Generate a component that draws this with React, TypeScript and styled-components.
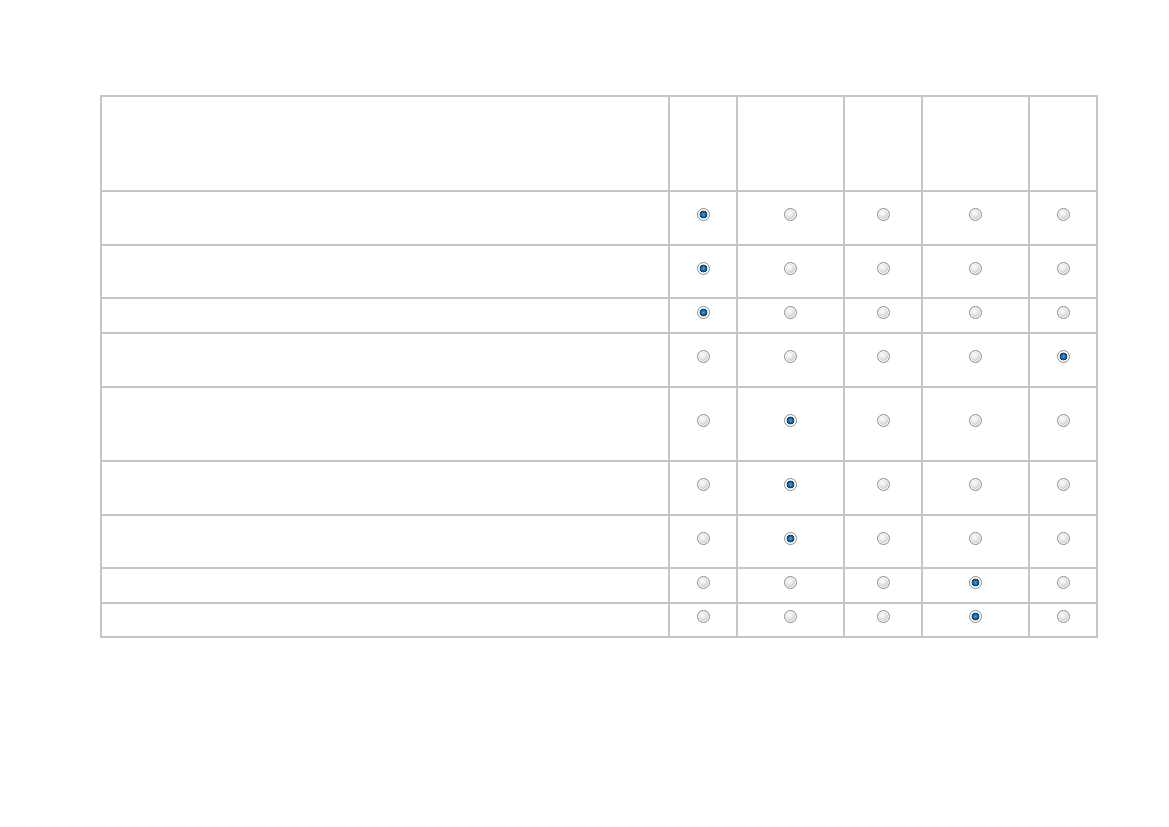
import React from 'react';
import styled, { createGlobalStyle } from 'styled-components';

const GlobalStyle = createGlobalStyle`
  html, body {
    margin: 0;
    padding: 0;
    background: #ffffff;
    font-family: "Liberation Sans", Arial, sans-serif;
  }
`;

const Page = styled.div`
  padding: 95px 0 0 100px;
`;

const Grid = styled.table`
  border-collapse: collapse;
  table-layout: fixed;
  width: 998px;
`;

const HeadCell = styled.th`
  border: 2px solid #c6c6c6;
  padding: 0;
  height: ${p => p.$h}px;
`;

const Cell = styled.td`
  border: 2px solid #c6c6c6;
  padding: 0;
  height: ${p => p.$h}px;
  vertical-align: middle;
`;

const Radio = styled.span`
  display: block;
  box-sizing: border-box;
  width: 13px;
  height: 13px;
  margin: 0 auto 7px;
  border-radius: 50%;
  border: 1px solid #8f8f8f;
  background: ${p =>
    p.$on
      ? 'radial-gradient(circle at 50% 50%, #3ea3e8 0, #1675c0 1.8px, #0e5696 2.8px, #1a3550 3.6px, #ffffff 4.2px, #f2f2f2 5.5px)'
      : 'radial-gradient(circle at 42% 38%, #fdfdfd 0, #eeeeee 2.5px, #d2d2d2 5.5px)'};
  box-shadow: inset 0 0 0 1px rgba(255, 255, 255, 0.9);
`;

const widths = [568, 68, 107, 78, 107, 68];
const rowHeights = [54, 53, 35, 54, 74, 54, 53, 35, 34];
const picks = [1, 1, 1, 5, 2, 2, 2, 4, 4];

const App: React.FC = () => (
  <Page>
    <GlobalStyle />
    <Grid>
      <colgroup>
        {widths.map((w, i) => (
          <col key={i} style={{ width: w }} />
        ))}
      </colgroup>
      <thead>
        <tr>
          {widths.map((_, i) => (
            <HeadCell key={i} $h={93} />
          ))}
        </tr>
      </thead>
      <tbody>
        {rowHeights.map((h, r) => (
          <tr key={r}>
            <Cell $h={h - 2} />
            {[1, 2, 3, 4, 5].map(c => (
              <Cell key={c} $h={h - 2}>
                <Radio $on={picks[r] === c} />
              </Cell>
            ))}
          </tr>
        ))}
      </tbody>
    </Grid>
  </Page>
);

export default App;
